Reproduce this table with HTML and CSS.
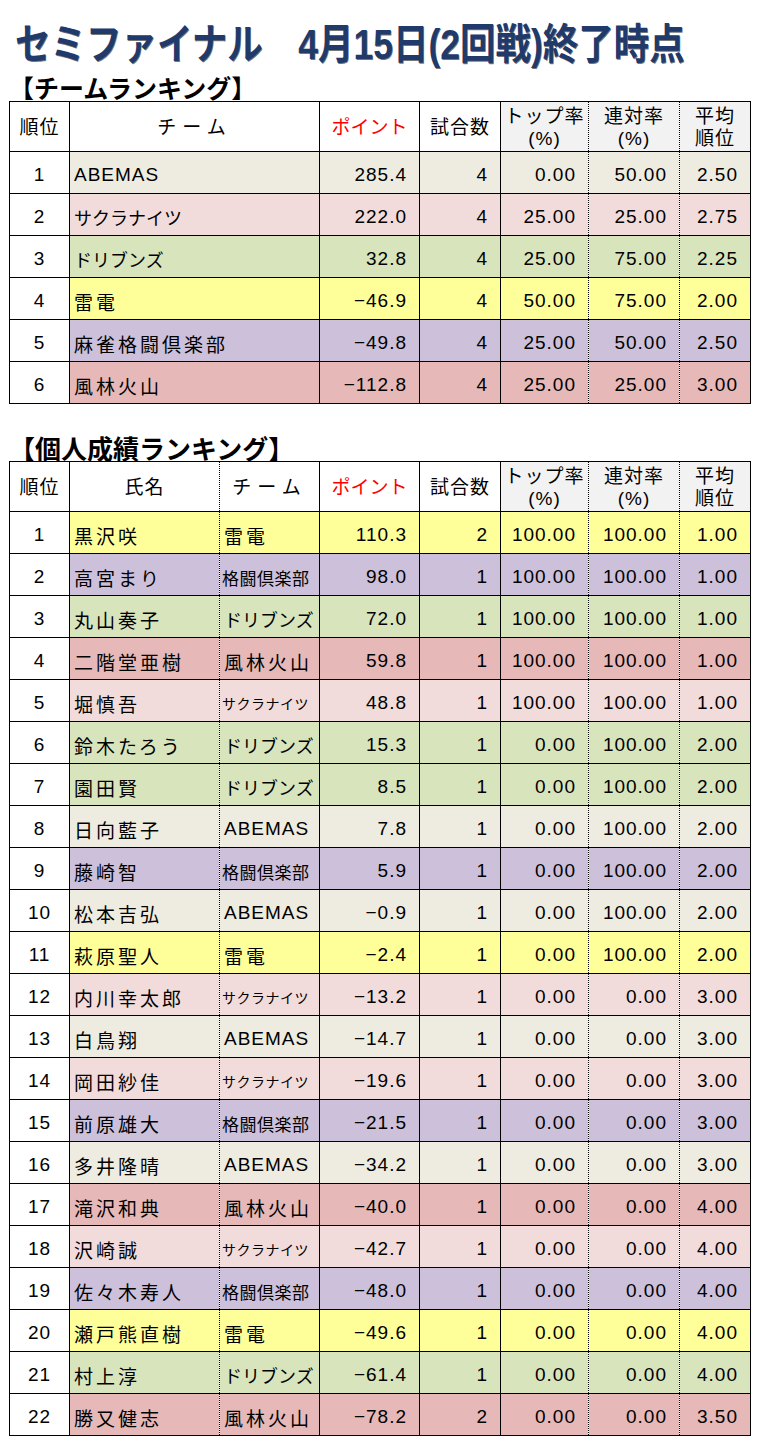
FILE: index.html
```html
<!DOCTYPE html>
<html lang="ja">
<head>
<meta charset="utf-8">
<title>セミファイナル 4月15日(2回戦)終了時点</title>
<link rel="stylesheet" href="styles.css">
</head>
<body>
<div class="page">
  <h1 class="title"><span class="title-inner">セミファイナル　4月15日(2回戦)終了時点</span></h1>

  <h2 class="section">【チームランキング】</h2>
  <table class="grid team">
    <colgroup>
      <col class="w-rank"><col class="w-team-wide"><col class="w-pt"><col class="w-games"><col class="w-top"><col class="w-ren"><col class="w-avg">
    </colgroup>
    <thead>
      <tr>
        <th>順位</th>
        <th class="jp-head">チーム</th>
        <th class="red">ポイント</th>
        <th>試合数</th>
        <th class="gray">トップ率<br>(%)</th>
        <th class="gray">連対率<br>(%)</th>
        <th class="gray">平均<br>順位</th>
      </tr>
    </thead>
    <tbody>
      <tr class="ab"><td class="rank">1</td><td class="name latin">ABEMAS</td><td class="num">285.4</td><td class="num">4</td><td class="num">0.00</td><td class="num">50.00</td><td class="num">2.50</td></tr>
      <tr class="sk"><td class="rank">2</td><td class="name kana">サクラナイツ</td><td class="num">222.0</td><td class="num">4</td><td class="num">25.00</td><td class="num">25.00</td><td class="num">2.75</td></tr>
      <tr class="dr"><td class="rank">3</td><td class="name kana">ドリブンズ</td><td class="num">32.8</td><td class="num">4</td><td class="num">25.00</td><td class="num">75.00</td><td class="num">2.25</td></tr>
      <tr class="rd"><td class="rank">4</td><td class="name">雷電</td><td class="num">−46.9</td><td class="num">4</td><td class="num">50.00</td><td class="num">75.00</td><td class="num">2.00</td></tr>
      <tr class="kk"><td class="rank">5</td><td class="name">麻雀格闘倶楽部</td><td class="num">−49.8</td><td class="num">4</td><td class="num">25.00</td><td class="num">50.00</td><td class="num">2.50</td></tr>
      <tr class="fr"><td class="rank">6</td><td class="name">風林火山</td><td class="num">−112.8</td><td class="num">4</td><td class="num">25.00</td><td class="num">25.00</td><td class="num">3.00</td></tr>
    </tbody>
  </table>

  <h2 class="section section-2">【個人成績ランキング】</h2>
  <table class="grid indiv">
    <colgroup>
      <col class="w-rank"><col class="w-name"><col class="w-team"><col class="w-pt"><col class="w-games"><col class="w-top"><col class="w-ren"><col class="w-avg">
    </colgroup>
    <thead>
      <tr>
        <th>順位</th>
        <th>氏名</th>
        <th class="jp-head">チーム</th>
        <th class="red">ポイント</th>
        <th>試合数</th>
        <th class="gray">トップ率<br>(%)</th>
        <th class="gray">連対率<br>(%)</th>
        <th class="gray">平均<br>順位</th>
      </tr>
    </thead>
    <tbody>
      <tr class="rd"><td class="rank">1</td><td class="name">黒沢咲</td><td class="tm">雷電</td><td class="num">110.3</td><td class="num">2</td><td class="num">100.00</td><td class="num">100.00</td><td class="num">1.00</td></tr>
      <tr class="kk"><td class="rank">2</td><td class="name">高宮まり</td><td class="tm sm">格闘倶楽部</td><td class="num">98.0</td><td class="num">1</td><td class="num">100.00</td><td class="num">100.00</td><td class="num">1.00</td></tr>
      <tr class="dr"><td class="rank">3</td><td class="name">丸山奏子</td><td class="tm kana">ドリブンズ</td><td class="num">72.0</td><td class="num">1</td><td class="num">100.00</td><td class="num">100.00</td><td class="num">1.00</td></tr>
      <tr class="fr"><td class="rank">4</td><td class="name">二階堂亜樹</td><td class="tm">風林火山</td><td class="num">59.8</td><td class="num">1</td><td class="num">100.00</td><td class="num">100.00</td><td class="num">1.00</td></tr>
      <tr class="sk"><td class="rank">5</td><td class="name">堀慎吾</td><td class="tm xs">サクラナイツ</td><td class="num">48.8</td><td class="num">1</td><td class="num">100.00</td><td class="num">100.00</td><td class="num">1.00</td></tr>
      <tr class="dr"><td class="rank">6</td><td class="name">鈴木たろう</td><td class="tm kana">ドリブンズ</td><td class="num">15.3</td><td class="num">1</td><td class="num">0.00</td><td class="num">100.00</td><td class="num">2.00</td></tr>
      <tr class="dr"><td class="rank">7</td><td class="name">園田賢</td><td class="tm kana">ドリブンズ</td><td class="num">8.5</td><td class="num">1</td><td class="num">0.00</td><td class="num">100.00</td><td class="num">2.00</td></tr>
      <tr class="ab"><td class="rank">8</td><td class="name">日向藍子</td><td class="tm latin">ABEMAS</td><td class="num">7.8</td><td class="num">1</td><td class="num">0.00</td><td class="num">100.00</td><td class="num">2.00</td></tr>
      <tr class="kk"><td class="rank">9</td><td class="name">藤崎智</td><td class="tm sm">格闘倶楽部</td><td class="num">5.9</td><td class="num">1</td><td class="num">0.00</td><td class="num">100.00</td><td class="num">2.00</td></tr>
      <tr class="ab"><td class="rank">10</td><td class="name">松本吉弘</td><td class="tm latin">ABEMAS</td><td class="num">−0.9</td><td class="num">1</td><td class="num">0.00</td><td class="num">100.00</td><td class="num">2.00</td></tr>
      <tr class="rd"><td class="rank">11</td><td class="name">萩原聖人</td><td class="tm">雷電</td><td class="num">−2.4</td><td class="num">1</td><td class="num">0.00</td><td class="num">100.00</td><td class="num">2.00</td></tr>
      <tr class="sk"><td class="rank">12</td><td class="name">内川幸太郎</td><td class="tm xs">サクラナイツ</td><td class="num">−13.2</td><td class="num">1</td><td class="num">0.00</td><td class="num">0.00</td><td class="num">3.00</td></tr>
      <tr class="ab"><td class="rank">13</td><td class="name">白鳥翔</td><td class="tm latin">ABEMAS</td><td class="num">−14.7</td><td class="num">1</td><td class="num">0.00</td><td class="num">0.00</td><td class="num">3.00</td></tr>
      <tr class="sk"><td class="rank">14</td><td class="name">岡田紗佳</td><td class="tm xs">サクラナイツ</td><td class="num">−19.6</td><td class="num">1</td><td class="num">0.00</td><td class="num">0.00</td><td class="num">3.00</td></tr>
      <tr class="kk"><td class="rank">15</td><td class="name">前原雄大</td><td class="tm sm">格闘倶楽部</td><td class="num">−21.5</td><td class="num">1</td><td class="num">0.00</td><td class="num">0.00</td><td class="num">3.00</td></tr>
      <tr class="ab"><td class="rank">16</td><td class="name">多井隆晴</td><td class="tm latin">ABEMAS</td><td class="num">−34.2</td><td class="num">1</td><td class="num">0.00</td><td class="num">0.00</td><td class="num">3.00</td></tr>
      <tr class="fr"><td class="rank">17</td><td class="name">滝沢和典</td><td class="tm">風林火山</td><td class="num">−40.0</td><td class="num">1</td><td class="num">0.00</td><td class="num">0.00</td><td class="num">4.00</td></tr>
      <tr class="sk"><td class="rank">18</td><td class="name">沢崎誠</td><td class="tm xs">サクラナイツ</td><td class="num">−42.7</td><td class="num">1</td><td class="num">0.00</td><td class="num">0.00</td><td class="num">4.00</td></tr>
      <tr class="kk"><td class="rank">19</td><td class="name">佐々木寿人</td><td class="tm sm">格闘倶楽部</td><td class="num">−48.0</td><td class="num">1</td><td class="num">0.00</td><td class="num">0.00</td><td class="num">4.00</td></tr>
      <tr class="rd"><td class="rank">20</td><td class="name">瀬戸熊直樹</td><td class="tm">雷電</td><td class="num">−49.6</td><td class="num">1</td><td class="num">0.00</td><td class="num">0.00</td><td class="num">4.00</td></tr>
      <tr class="dr"><td class="rank">21</td><td class="name">村上淳</td><td class="tm kana">ドリブンズ</td><td class="num">−61.4</td><td class="num">1</td><td class="num">0.00</td><td class="num">0.00</td><td class="num">4.00</td></tr>
      <tr class="fr"><td class="rank">22</td><td class="name">勝又健志</td><td class="tm">風林火山</td><td class="num">−78.2</td><td class="num">2</td><td class="num">0.00</td><td class="num">0.00</td><td class="num">3.50</td></tr>
    </tbody>
  </table>
</div>
</body>
</html>
```

FILE: styles.css
```css
html, body {
  margin: 0;
  padding: 0;
  background: #ffffff;
}

body {
  font-family: "Liberation Sans", "Noto Sans CJK JP", sans-serif;
  color: #000000;
}

.page {
  padding: 0 0 0 9px;
}

.title {
  margin: 0;
  padding: 20px 0 0 6px;
  height: 54px;
  overflow: hidden;
  font-family: "Liberation Sans", "Noto Sans CJK JP", sans-serif;
  font-weight: 700;
  font-size: 42px;
  line-height: 50px;
  color: #1f3a6b;
  white-space: nowrap;
}

.title-inner {
  display: inline-block;
  transform: scaleX(0.845);
  transform-origin: left center;
  text-shadow: 1px 1px 0 rgba(0, 0, 0, 0.55);
}

.section {
  margin: 0;
  height: 27px;
  font-family: "Noto Sans CJK JP", sans-serif;
  font-weight: 700;
  font-size: 25px;
  line-height: 27px;
  color: #000000;
  white-space: nowrap;
}

.section-2 {
  margin-top: 30px;
  font-size: 26px;
}

.grid {
  border-collapse: collapse;
  table-layout: fixed;
  width: 742px;
}

.w-rank { width: 60px; }
.w-team-wide { width: 250px; }
.w-name { width: 150px; }
.w-team { width: 100px; }
.w-pt { width: 100px; }
.w-games { width: 81px; }
.w-top { width: 88px; }
.w-ren { width: 91px; }
.w-avg { width: 71px; }

.grid th,
.grid td {
  border: 1px solid #000000;
  padding: 0;
  white-space: nowrap;
  overflow: hidden;
}

.grid thead tr {
  height: 50px;
}

.grid tbody tr {
  height: 42px;
}

.grid th {
  font-family: "Liberation Sans", "Noto Sans CJK JP", sans-serif;
  font-weight: 400;
  font-size: 19px;
  line-height: 22px;
  letter-spacing: 1px;
  text-align: center;
  vertical-align: middle;
  background: #ffffff;
  padding-top: 2px;
}

.grid th.jp-head {
  letter-spacing: 6px;
}

.grid th.red {
  color: #ff0000;
  letter-spacing: 0;
}

.grid th.gray {
  background: #f2f2f2;
}

/* dotted separators */
.team tr > *:nth-child(5) { border-right: 1px dotted #000000; }
.team tr > *:nth-child(6) { border-left: 1px dotted #000000; border-right: 1px dotted #000000; }
.team tr > *:nth-child(7) { border-left: 1px dotted #000000; }

.indiv tr > *:nth-child(2) { border-right: 1px dotted #000000; }
.indiv tr > *:nth-child(3) { border-left: 1px dotted #000000; }
.indiv tr > *:nth-child(6) { border-right: 1px dotted #000000; }
.indiv tr > *:nth-child(7) { border-left: 1px dotted #000000; border-right: 1px dotted #000000; }
.indiv tr > *:nth-child(8) { border-left: 1px dotted #000000; }

.grid td {
  font-size: 19px;
  vertical-align: middle;
  padding-top: 5px;
}

.grid td.rank {
  background: #ffffff;
  text-align: center;
  letter-spacing: 1px;
}

.grid td.name,
.grid td.tm {
  text-align: left;
  padding-left: 4px;
  letter-spacing: 3px;
}

.grid td.name.latin,
.grid td.tm.latin {
  letter-spacing: 1px;
}

.grid td.kana {
  letter-spacing: 0;
  font-size: 18px;
}

.grid td.tm.sm {
  font-size: 17px;
  letter-spacing: 0.5px;
  padding-left: 2px;
}

.grid td.tm.xs {
  font-size: 14px;
  letter-spacing: 0.5px;
  padding-left: 2px;
}

.grid td.num {
  text-align: right;
  padding-right: 12px;
  letter-spacing: 1px;
}

/* team colours */
.ab td { background: #eeece1; }
.sk td { background: #f2dcdb; }
.dr td { background: #d8e4bc; }
.rd td { background: #ffff99; }
.kk td { background: #ccc0da; }
.fr td { background: #e6b8b7; }
```
